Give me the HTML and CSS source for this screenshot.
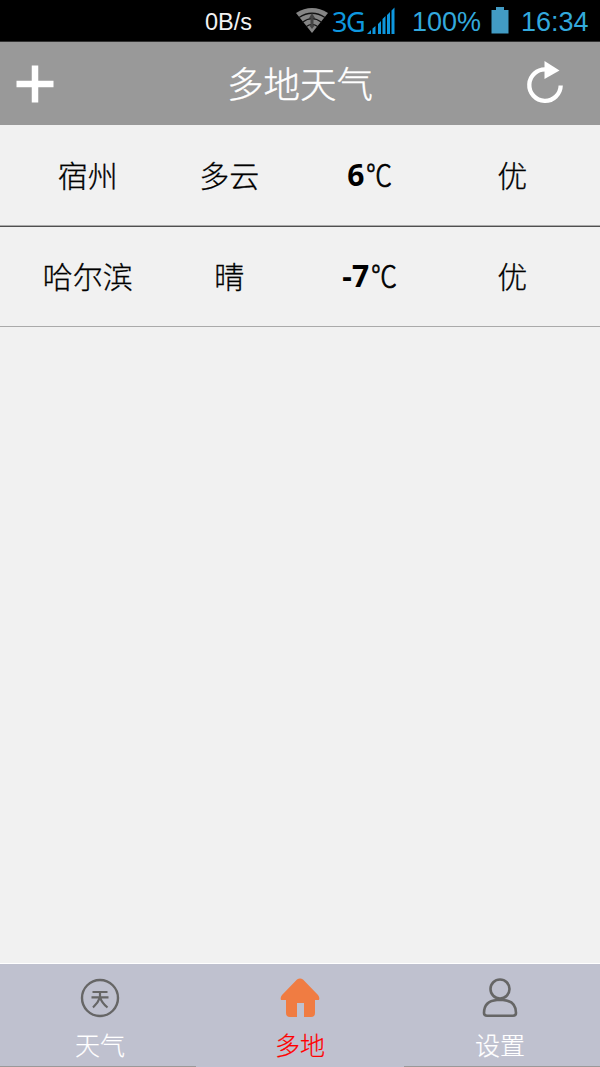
FILE: index.html
```
<!DOCTYPE html>
<html lang="zh-CN">
<head>
<meta charset="utf-8">
<title>多地天气</title>
<link rel="stylesheet" href="styles.css">
</head>
<body>
<div class="app">
  <div class="status">
    <span class="speed">0B/s</span>
    <svg class="wifi" width="34" height="28" viewBox="0 0 34 28">
      <path d="M0 6Q16 -4 32 6L16 26Z" fill="#858585"/>
      <path d="M3 10.500Q16 2 29 10.500M6.500 15.300Q16 8 25.500 15.300M10 19.800Q16 15 22 19.800" fill="none" stroke="#111" stroke-width="1.300"/>
      <path d="M16 6l3 5h-1.500v7h1.500L16 22l-3-4h1.500v-7H13z" fill="#444"/>
    </svg>
    <span class="net">3G</span>
    <svg class="signal" width="28" height="28" viewBox="0 0 28 28" fill="#0e97df">
      <path d="M0 27l4-4v4zM5.500 21.500l3-2.500v8h-3zM11 17l3-3v13h-3zM15.500 12l3-3v18h-3zM20 8l3-3v22h-3zM24.500 3.500l3-3V27h-3z"/>
    </svg>
    <span class="percent">100%</span>
    <svg class="battery" width="18" height="27" viewBox="0 0 18 27"><path d="M5 0h8v3h4.500v23.500H.5V3H5z" fill="#429bc4"/></svg>
    <span class="clock">16:34</span>
  </div>
  <header class="header">
    <svg class="add" width="38" height="38" viewBox="0 0 38 38"><path d="M19 .5v37M.5 19h37" stroke="#fff" stroke-width="6.500"/></svg>
    <h1 class="title">多地天气</h1>
    <svg class="refresh" width="38" height="44" viewBox="0 0 38 44">
      <path d="M20 9.500A15.700 15.700 0 1 0 34.700 25.500" fill="none" stroke="#fff" stroke-width="4.300"/>
      <path d="M18.500 1l15 9.500L18.500 19z" fill="#fff"/>
    </svg>
  </header>
  <main class="list">
    <div class="row">
      <span>宿州</span><span>多云</span><span class="temp"><b>6</b><span class="unit">℃</span></span><span class="air">优</span>
    </div>
    <div class="row row-last">
      <span>哈尔滨</span><span>晴</span><span class="temp"><b>-7</b><span class="unit">℃</span></span><span class="air">优</span>
    </div>
  </main>
  <nav class="tabs">
    <div class="tab">
      <svg width="40" height="40" viewBox="0 0 40 40" fill="none" stroke="#666">
        <circle cx="20" cy="20" r="18" stroke-width="2.400"/>
        <path d="M12.500 14h15M11.500 19.300h17M20 14v5.300Q18 25 13 29.500M20 19.300Q22 25 27.500 29.500" stroke-width="2.200"/>
      </svg>
      <span>天气</span>
    </div>
    <div class="tab tab-active">
      <svg width="40" height="40" viewBox="0 0 40 40" fill="#f07c42">
        <path d="M17 1.500Q20-.5 23 1.500L38 17Q40 19.500 39 22H35V35Q35 39 31 39H24V25H17V39H10Q6 39 6 35V22H1Q0 19.500 2 17Z"/>
      </svg>
      <span>多地</span>
    </div>
    <div class="tab">
      <svg width="40" height="40" viewBox="0 0 40 40" fill="none" stroke="#666" stroke-width="2.600">
        <circle cx="20" cy="11" r="9.500"/>
        <path d="M17 22H23Q36 23 36 35Q36 37.700 33 37.700H7Q4 37.700 4 35Q4 23 17 22Z"/>
      </svg>
      <span>设置</span>
    </div>
  </nav>
</div>
</body>
</html>
```
FILE: styles.css
```
* { box-sizing: border-box; }
body { margin: 0; }
.app {
  width: 600px;
  height: 1067px;
  display: flex;
  flex-direction: column;
  background: #f1f1f1;
  font-family: "Noto Sans CJK SC", sans-serif;
  font-weight: 300;
  overflow: hidden;
}
.status {
  height: 42px;
  display: flex;
  align-items: center;
  padding-left: 205px;
  background: #000;
  border-bottom: 1px solid #333;
  color: #33a9dc;
  font-family: "Liberation Sans", sans-serif;
  font-weight: 400;
  white-space: nowrap;
}
.speed { width: 91px; padding-top: 4px; color: #f2f2f2; font-size: 23.5px; }
.wifi { margin-right: 2px; }
.net { width: 35px; padding-top: 1px; font: 400 27px "Noto Sans", sans-serif; color: #0e97df; letter-spacing: -1.5px; }
.signal { margin-right: 17px; }
.percent { width: 79px; padding-top: 4px; font-size: 27px; }
.battery { margin-right: 12px; }
.clock { padding-top: 4px; font-size: 27px; }
.header {
  height: 83px;
  display: flex;
  align-items: center;
  padding: 0 36px 0 16px;
  background: #999;
}
.title {
  flex: 1;
  margin: 0;
  padding: 0 0 1px 20px;
  text-align: center;
  font-size: 36.5px;
  font-weight: 300;
  line-height: 54px;
  color: #fff;
  -webkit-text-stroke: 0.4px;
}
.refresh { margin-bottom: 4px; }
.list { flex: 1; }
.row {
  height: 102px;
  display: grid;
  grid-template-columns: repeat(4, 1fr);
  align-items: center;
  padding: 0 17px;
  border-bottom: 1px solid #505050;
  box-shadow: inset 0 -1px #aaa;
  text-align: center;
  font-size: 30px;
  line-height: 44px;
  color: #000;
  -webkit-text-stroke: 0.3px;
}
.row > span { padding-bottom: 4px; }
.row > .air, .row > .temp { padding-bottom: 3px; }
.row-last { height: 100px; border-color: #aaa; box-shadow: none; }
.temp b { font-family: "Noto Sans", sans-serif; font-weight: 700; -webkit-text-stroke: 0; }
.unit { display: inline-block; transform: scaleX(0.87); -webkit-text-stroke: 0.7px; }
.tabs {
  height: 104px;
  display: grid;
  grid-template-columns: repeat(3, 1fr);
  border-top: 1px solid #fff;
  background: linear-gradient(#999, #999) 0 100% / 196px 1px no-repeat,
    linear-gradient(#999, #999) 100% 100% / 196px 1px no-repeat, #bfc1cf;
}
.tab {
  display: flex;
  flex-direction: column;
  align-items: center;
  padding-top: 14px;
  font-size: 25px;
  line-height: 36px;
  color: #fff;
}
.tab span { margin-top: 8px; -webkit-text-stroke: 0.2px; }
.tab-active { color: #f00; }
```
